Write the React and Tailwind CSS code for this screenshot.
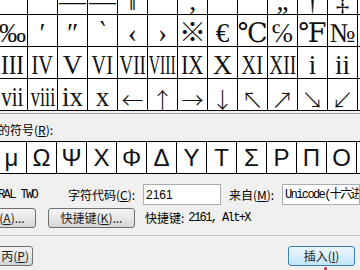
import React from 'react';

// Symbol table rows (top row is cut off by the window)
const symbolRows = [
  [
    { ch: '‘' }, { ch: '’' }, { ch: '—' }, { ch: '―' }, { ch: '‖' }, { ch: '' },
    { ch: '‚' }, { ch: '‛' }, { ch: '“' }, { ch: '„' }, { ch: '†' }, { ch: '‡' },
  ],
  [
    { ch: '‰' }, { ch: '′' }, { ch: '″' }, { ch: '‵' }, { ch: '‹' }, { ch: '›' },
    { ch: '※' }, { ch: '€' }, { ch: '℃' }, { ch: '℅' }, { ch: '℉' }, { ch: '№' },
  ],
  [
    { ch: 'III', cls: 'scale-x-[0.85]' }, { ch: 'IV', cls: 'scale-x-[0.75]' },
    { ch: 'V' }, { ch: 'VI', cls: 'scale-x-[0.75]' },
    { ch: 'VII', cls: 'scale-x-[0.7]' }, { ch: 'VIII', cls: 'scale-x-[0.58]' },
    { ch: 'IX', cls: 'scale-x-[0.78]' }, { ch: 'X' },
    { ch: 'XI', cls: 'scale-x-[0.75]' }, { ch: 'XII', cls: 'scale-x-[0.72]' },
    { ch: 'i' }, { ch: 'ii' },
  ],
  [
    { ch: 'vii', cls: 'scale-x-[0.78]' }, { ch: 'viii', cls: 'scale-x-[0.68]' },
    { ch: 'ix' }, { ch: 'x' },
    { ch: '←', arrow: true }, { ch: '↑', arrow: true }, { ch: '→', arrow: true }, { ch: '↓', arrow: true },
    { ch: '↖', arrow: true }, { ch: '↗', arrow: true }, { ch: '↘', arrow: true }, { ch: '↙', arrow: true },
  ],
];

const recent = ['μ', 'Ω', 'Ψ', 'Χ', 'Φ', 'Δ', 'Υ', 'Τ', 'Σ', 'Ρ', 'Π', 'Ο'];

const cjk = "font-['Noto_Sans_CJK_SC',sans-serif]";
const mono = "font-['Liberation_Mono','Noto_Sans_CJK_SC',monospace]";

const Btn = ({ children, className = '' }) => (
  <div
    className={`h-[20px] flex items-center justify-center rounded-[3px] border border-[#707070] bg-gradient-to-b from-[#f4f4f4] via-[#e8e8e8] to-[#d6d6d6] text-[12px] leading-none text-[#1a1a1a] ${cjk} ${className}`}
  >
    {children}
  </div>
);

export default function App() {
  return (
    <div className="relative w-[360px] h-[270px] overflow-hidden bg-[#f0f0f0] flex flex-col">
      {/* symbol grid */}
      <div className="h-[111px] overflow-hidden shrink-0 bg-[#f0f0f0]">
        <div className="-mt-[17px] -ml-[2px] w-[390px] bg-white">
          {symbolRows.map((row, r) => (
            <div key={r} className="flex h-[32px] border-b border-black">
              {row.map((c, i) => (
                <div
                  key={i}
                  className={`w-[30px] shrink-0 border-r border-black flex items-center justify-center overflow-hidden leading-none text-[#111] ${
                    c.arrow
                      ? "font-['Noto_Sans_CJK_SC',sans-serif] text-[22px] font-light"
                      : "font-['Liberation_Serif','DejaVu_Serif','Noto_Sans_CJK_SC',serif] text-[27px]"
                  }`}
                >
                  <span className={`inline-block whitespace-nowrap translate-y-[3px] ${c.cls || ''}`}>{c.ch}</span>
                </div>
              ))}
            </div>
          ))}
        </div>
      </div>
      <div className="mt-[2px] h-px bg-[#a0a0a0] shrink-0" />

      {/* recently used label */}
      <div className={`pt-[9px] h-[27px] shrink-0 -ml-[62px] whitespace-nowrap text-[12px] leading-[14px] text-black ${cjk}`}>
        近期使用过的符号(<u>R</u>):
      </div>

      {/* recently used row */}
      <div className="h-[33px] shrink-0 overflow-hidden">
        <div className="-ml-[3px] w-[390px] flex h-[33px] border-y border-black bg-white">
          {recent.map((ch, i) => (
            <div
              key={i}
              className="w-[30px] shrink-0 border-r border-black flex items-center justify-center font-['Liberation_Sans','DejaVu_Sans',sans-serif] text-[24px] leading-none text-[#111]"
            >
              {ch}
            </div>
          ))}
        </div>
      </div>

      {/* name / code row */}
      <div className="mt-[10px] h-[21px] shrink-0 flex items-center whitespace-nowrap text-[12px] text-black">
        <div className="w-[68px] shrink-0 overflow-hidden">
          <span className={`block -ml-[58px] text-[12px] tracking-[-1.6px] ${mono}`}>ROMAN NUMERAL TWO</span>
        </div>
        <div className={`w-[75px] shrink-0 ${cjk}`}>
          字符代码(<u>C</u>):
        </div>
        <div className="w-[78px] h-[21px] shrink-0 border border-[#abadb3] bg-white flex items-center pl-[2px] font-['Liberation_Sans',sans-serif] text-[12px]">
          2161
        </div>
        <div className={`ml-[8px] w-[53px] shrink-0 ${cjk}`}>
          来自(<u>M</u>):
        </div>
        <div className={`flex-1 h-[21px] border border-[#abadb3] bg-white flex items-center pl-[2px] overflow-hidden text-[12px] tracking-[-1.6px] ${mono}`}>
          Unicode(十六进制)
        </div>
      </div>

      {/* buttons row */}
      <div className="mt-[3px] h-[20px] shrink-0 flex items-center whitespace-nowrap">
        <Btn className="-ml-[60px] w-[96px] shrink-0">
          自动更正(<u>A</u>)...
        </Btn>
        <Btn className="ml-[12px] w-[87px] shrink-0">
          快捷键(<u>K</u>)...
        </Btn>
        <div className="ml-[10px] flex items-center text-[12px] text-black">
          <span className={cjk}>快捷键:</span>
          <span className={`ml-[4px] text-[12px] tracking-[-1.6px] ${mono}`}>2161, Alt+X</span>
        </div>
      </div>

      {/* separator */}
      <div className="mt-[7px] h-px bg-[#c8c8c8] shrink-0" />

      {/* bottom buttons */}
      <div className="mt-[10px] h-[20px] shrink-0 flex items-center whitespace-nowrap">
        <Btn className="-ml-[30px] w-[63px] shrink-0 !justify-end pr-[3px]">
          丙(<u>P</u>)
        </Btn>
        <Btn className="ml-auto mr-[5px] w-[67px] shrink-0 !border-[#3c7fb1] !from-[#eaf6fd] !via-[#d9eefc] !to-[#bee6fd]">
          插入(<u>I</u>)
        </Btn>
      </div>

      <div className="absolute left-[324px] top-[267px] w-[3px] h-[3px] bg-[#d02020] rounded-full" />
    </div>
  );
}
